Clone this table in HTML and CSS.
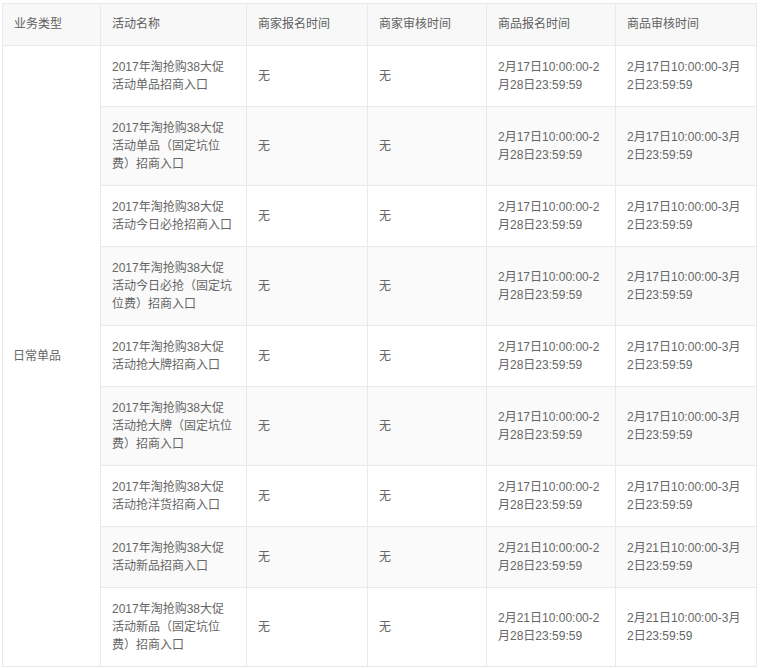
FILE: index.html
```html
<!DOCTYPE html>
<html lang="zh-CN">
<head>
<meta charset="utf-8">
<title>活动列表</title>
<link rel="stylesheet" href="styles.css">
</head>
<body>
<div class="wrap">
<table class="grid">
  <colgroup>
    <col class="c1"><col class="c2"><col class="c3"><col class="c4"><col class="c5"><col class="c6">
  </colgroup>
  <thead>
    <tr>
      <th>业务类型</th>
      <th>活动名称</th>
      <th>商家报名时间</th>
      <th>商家审核时间</th>
      <th>商品报名时间</th>
      <th>商品审核时间</th>
    </tr>
  </thead>
  <tbody>
    <tr>
      <td rowspan="9" class="type">日常单品</td>
      <td>2017年淘抢购38大促<br>活动单品招商入口</td>
      <td>无</td><td>无</td>
      <td>2月17日10:00:00-2<br>月28日23:59:59</td>
      <td>2月17日10:00:00-3月<br>2日23:59:59</td>
    </tr>
    <tr class="alt">
      <td>2017年淘抢购38大促<br>活动单品（固定坑位<br>费）招商入口</td>
      <td>无</td><td>无</td>
      <td>2月17日10:00:00-2<br>月28日23:59:59</td>
      <td>2月17日10:00:00-3月<br>2日23:59:59</td>
    </tr>
    <tr>
      <td>2017年淘抢购38大促<br>活动今日必抢招商入口</td>
      <td>无</td><td>无</td>
      <td>2月17日10:00:00-2<br>月28日23:59:59</td>
      <td>2月17日10:00:00-3月<br>2日23:59:59</td>
    </tr>
    <tr class="alt">
      <td>2017年淘抢购38大促<br>活动今日必抢（固定坑<br>位费）招商入口</td>
      <td>无</td><td>无</td>
      <td>2月17日10:00:00-2<br>月28日23:59:59</td>
      <td>2月17日10:00:00-3月<br>2日23:59:59</td>
    </tr>
    <tr>
      <td>2017年淘抢购38大促<br>活动抢大牌招商入口</td>
      <td>无</td><td>无</td>
      <td>2月17日10:00:00-2<br>月28日23:59:59</td>
      <td>2月17日10:00:00-3月<br>2日23:59:59</td>
    </tr>
    <tr class="alt">
      <td>2017年淘抢购38大促<br>活动抢大牌（固定坑位<br>费）招商入口</td>
      <td>无</td><td>无</td>
      <td>2月17日10:00:00-2<br>月28日23:59:59</td>
      <td>2月17日10:00:00-3月<br>2日23:59:59</td>
    </tr>
    <tr>
      <td>2017年淘抢购38大促<br>活动抢洋货招商入口</td>
      <td>无</td><td>无</td>
      <td>2月17日10:00:00-2<br>月28日23:59:59</td>
      <td>2月17日10:00:00-3月<br>2日23:59:59</td>
    </tr>
    <tr class="alt">
      <td>2017年淘抢购38大促<br>活动新品招商入口</td>
      <td>无</td><td>无</td>
      <td>2月21日10:00:00-2<br>月28日23:59:59</td>
      <td>2月21日10:00:00-3月<br>2日23:59:59</td>
    </tr>
    <tr>
      <td>2017年淘抢购38大促<br>活动新品（固定坑位<br>费）招商入口</td>
      <td>无</td><td>无</td>
      <td>2月21日10:00:00-2<br>月28日23:59:59</td>
      <td>2月21日10:00:00-3月<br>2日23:59:59</td>
    </tr>
  </tbody>
</table>
</div>
</body>
</html>
```

FILE: styles.css
```css
html, body {
  margin: 0;
  padding: 0;
  background: #fff;
}

.wrap {
  padding: 3px 0 0 2px;
}

.grid {
  border-collapse: collapse;
  table-layout: fixed;
  width: 754px;
  font-family: "Liberation Sans", "Noto Sans CJK SC", sans-serif;
  font-size: 12px;
  line-height: 18px;
  color: #666;
}

.c1 { width: 98px; }
.c2 { width: 146px; }
.c3 { width: 121px; }
.c4 { width: 119px; }
.c5 { width: 129px; }
.c6 { width: 141px; }

.grid th,
.grid td {
  border: 1px solid #e9e9e9;
  padding: 12px 11px;
  text-align: left;
  vertical-align: middle;
  white-space: nowrap;
}

.grid th {
  font-weight: normal;
  color: #606060;
  background: #f8f8f8;
  padding-top: 11px;
  padding-bottom: 12px;
}

.grid .type {
  padding-left: 10px;
  background: #fff;
}

.grid tr.alt td {
  background: #fafafa;
}
```
